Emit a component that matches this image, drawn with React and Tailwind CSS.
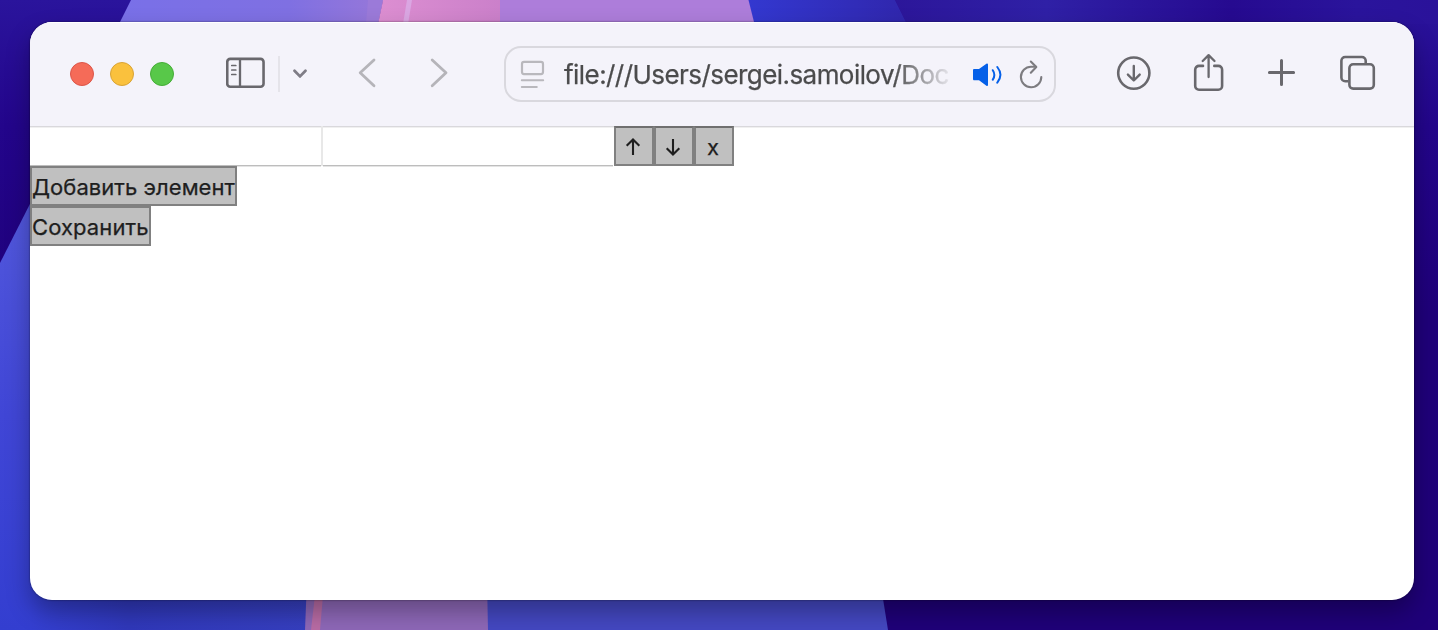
import React from "react";

function Wallpaper() {
  return (
    <svg className="absolute inset-0 h-full w-full" viewBox="0 0 1438 630" preserveAspectRatio="none" aria-hidden="true">
      <defs>
        <linearGradient id="base" x1="0" y1="0" x2="0" y2="1">
          <stop offset="0" stopColor="#2a149c" />
          <stop offset="0.2" stopColor="#23058b" />
          <stop offset="0.5" stopColor="#1f007a" />
          <stop offset="1" stopColor="#1f0079" />
        </linearGradient>
        <linearGradient id="topLeft" gradientUnits="userSpaceOnUse" x1="120" y1="0" x2="380" y2="0">
          <stop offset="0" stopColor="#7970e8" />
          <stop offset="0.65" stopColor="#7f70e2" />
          <stop offset="1" stopColor="#9677d9" />
        </linearGradient>
        <linearGradient id="pink" gradientUnits="userSpaceOnUse" x1="380" y1="0" x2="500" y2="0">
          <stop offset="0" stopColor="#dc8ed1" />
          <stop offset="1" stopColor="#cb80ca" />
        </linearGradient>
        <linearGradient id="topBlue" gradientUnits="userSpaceOnUse" x1="748" y1="0" x2="910" y2="0">
          <stop offset="0" stopColor="#3338d0" />
          <stop offset="1" stopColor="#3026ac" />
        </linearGradient>
        <linearGradient id="topDark" gradientUnits="userSpaceOnUse" x1="895" y1="0" x2="1438" y2="0">
          <stop offset="0" stopColor="#2c169a" />
          <stop offset="0.28" stopColor="#2f20a6" />
          <stop offset="0.62" stopColor="#260a90" />
          <stop offset="0.85" stopColor="#2a149c" />
          <stop offset="1" stopColor="#2a129a" />
        </linearGradient>
        <linearGradient id="leftBlue" gradientUnits="userSpaceOnUse" x1="0" y1="200" x2="0" y2="630">
          <stop offset="0" stopColor="#5258dc" />
          <stop offset="0.5" stopColor="#4046d6" />
          <stop offset="1" stopColor="#333ed0" />
        </linearGradient>
        <linearGradient id="bottomBlue" gradientUnits="userSpaceOnUse" x1="30" y1="0" x2="310" y2="0">
          <stop offset="0" stopColor="#343fd1" />
          <stop offset="0.35" stopColor="#3038bb" />
          <stop offset="1" stopColor="#363fc0" />
        </linearGradient>
      </defs>
      <rect width="1438" height="630" fill="url(#base)" />
      <polygon points="131,0 383,0 378,24 119,24" fill="url(#topLeft)" />
      <polygon points="368,0 383,0 378,24 366,24" fill="#9b7ad9" />
      <polygon points="383,0 500,0 500,24 378,24" fill="url(#pink)" />
      <polygon points="407,0 412,0 408,24 403,24" fill="#daa6e2" />
      <polygon points="748,0 895,0 907,24 754,24" fill="url(#topBlue)" />
      <polygon points="500,0 748.5,0 754.5,24 500,24" fill="#ad7dda" />
      <polygon points="895,0 1438,0 1438,24 907,24" fill="url(#topDark)" />
      <polygon points="0,263 34,196 60,630 0,630" fill="url(#leftBlue)" />
      <rect x="30" y="580" width="280" height="50" fill="url(#bottomBlue)" />
      <polygon points="307,580 488,580 488,630 305,630" fill="#8e68b8" />
      <polygon points="315,595 323,595 320,630 311,630" fill="#b96ca5" />
      <polygon points="487,580 880,580 888,630 488,630" fill="#4448c2" />
    </svg>
  );
}

function SidebarIcon() {
  return (
    <svg className="h-[104px] w-[40px] shrink-0" viewBox="226 22 40 104" fill="none" stroke="#69686d">
      <rect x="227.25" y="58.9" width="36.3" height="27.8" rx="3" strokeWidth="2.6" />
      <path d="M240 59v28" strokeWidth="2.3" />
      <path d="M231.8 65.5h4M231.8 70h4M231.8 74.5h4" strokeWidth="1.7" strokeLinecap="round" />
    </svg>
  );
}

function ChevronDown() {
  return (
    <svg className="ml-[12px] h-[104px] w-[16px] shrink-0" viewBox="292 22 16 104" fill="none" stroke="#7f7d86">
      <path d="M294.5 70.7l5.5 5.7 5.5-5.7" strokeWidth="2.8" strokeLinecap="round" strokeLinejoin="round" />
    </svg>
  );
}

function BackIcon() {
  return (
    <svg className="ml-[50px] h-[104px] w-[18px] shrink-0" viewBox="358 22 18 104" fill="none" stroke="#b5b4b9">
      <path d="M374 60l-13.8 12.8L374 85.8" strokeWidth="2.8" strokeLinecap="round" strokeLinejoin="round" />
    </svg>
  );
}

function ForwardIcon() {
  return (
    <svg className="ml-[54px] h-[104px] w-[18px] shrink-0" viewBox="430 22 18 104" fill="none" stroke="#b5b4b9">
      <path d="M432.2 60L446 72.8l-13.8 13" strokeWidth="2.8" strokeLinecap="round" strokeLinejoin="round" />
    </svg>
  );
}

function PageIcon() {
  return (
    <svg className="h-[52px] w-[26px] shrink-0" viewBox="520 48 26 52" fill="none" stroke="#b9b8bd">
      <rect x="522" y="61.9" width="21" height="12.2" rx="2" strokeWidth="2.2" />
      <path d="M521.8 80.3h21.400M521.800 87h15" strokeWidth="2" strokeLinecap="round" />
    </svg>
  );
}

function SpeakerIcon() {
  return (
    <svg className="ml-[22px] h-[52px] w-[30px] shrink-0" viewBox="973 48 30 52" fill="none" stroke="#0560e8">
      <path
        d="M974.3 69h4.7l7.4-5.2c.8-.6 1.6-.2 1.6.7v20.6c0 .9-.8 1.3-1.6.7L979 80.3h-4.7c-.8 0-1.3-.5-1.3-1.3v-8.7c0-.8.5-1.3 1.3-1.3z"
        fill="#0560e8"
        stroke="none"
      />
      <path d="M992.8 70.2c1.900 2.900 1.900 6.500 0 9.400M997.300 67c4 5 4 10.700 0 15.700" strokeWidth="2" strokeLinecap="round" />
    </svg>
  );
}

function ReloadIcon() {
  return (
    <svg className="ml-[16px] h-[52px] w-[26px] shrink-0" viewBox="1019 48 26 52" fill="none" stroke="#7d7c80">
      <path d="M1036 66.800h-5A10.200 10.200 0 1 0 1041.300 77" strokeWidth="2.100" strokeLinecap="round" />
      <path d="M1030.800 61.600l5.500 5.500-5.500 5.600" strokeWidth="2.100" strokeLinecap="round" strokeLinejoin="round" />
    </svg>
  );
}

function DownloadIcon() {
  return (
    <svg className="ml-[60px] h-[104px] w-[36px] shrink-0" viewBox="1116 22 36 104" fill="none" stroke="#69686d">
      <circle cx="1133.800" cy="73.100" r="15.600" strokeWidth="2.600" />
      <path d="M1133.800 66v14.300M1127.900 74.600l5.900 5.900 5.900-5.900" strokeWidth="2.400" strokeLinecap="round" strokeLinejoin="round" />
    </svg>
  );
}

function ShareIcon() {
  return (
    <svg className="ml-[41px] h-[104px] w-[32px] shrink-0" viewBox="1193 22 32 104" fill="none" stroke="#69686d" strokeLinecap="round" strokeLinejoin="round">
      <path d="M1203 65.900h-4a3.800 3.800 0 0 0-3.800 3.800v16.200a3.800 3.800 0 0 0 3.800 3.800h19.300a3.800 3.800 0 0 0 3.800-3.800V69.700a3.800 3.800 0 0 0-3.800-3.800h-4" strokeWidth="2.600" />
      <path d="M1208.600 77V55.500M1202.700 61l5.900-5.900 5.900 5.900" strokeWidth="2.300" />
    </svg>
  );
}

function PlusIcon() {
  return (
    <svg className="ml-[42px] h-[104px] w-[30px] shrink-0" viewBox="1267 22 30 104" fill="none" stroke="#69686d">
      <path d="M1281.500 60.400v24.200M1269.400 72.500h24.200" strokeWidth="3" strokeLinecap="round" />
    </svg>
  );
}

function TabsIcon() {
  return (
    <svg className="ml-[42px] h-[104px] w-[38px] shrink-0" viewBox="1339 22 38 104" fill="none" stroke="#69686d" strokeWidth="2.600">
      <path d="M1348.500 81.200h-3.300a3.800 3.800 0 0 1-3.800-3.800V60.800a3.800 3.800 0 0 1 3.800-3.800h16.700a3.800 3.800 0 0 1 3.800 3.800v2.700" />
      <rect x="1349.400" y="64.300" width="24.400" height="24.300" rx="3.800" />
    </svg>
  );
}

function ArrowIcon({ down }) {
  return (
    <svg className="mr-[2px] h-[36px] w-[34px] shrink-0" viewBox="0 0 34 36" fill="none" stroke="#1e1e1e" strokeWidth="2.1">
      <path d={down ? "M17 11v15.2M10.7 20.2l6.3 6.3 6.3-6.3" : "M17 27V11.8M10.7 17.8l6.3-6.3 6.3 6.3"} />
    </svg>
  );
}

function ItemButton({ label, children }) {
  return (
    <button
      aria-label={label}
      className="flex h-[40px] w-[40px] items-center justify-center border-2 border-t-[#6f6f6f] border-r-[#808080] border-b-[#808080] border-l-[#808080] bg-[#c0c0c0] text-[22px] text-[#1e1e1e]"
    >
      {children}
    </button>
  );
}

export default function App() {
  return (
    <div className="relative h-[630px] w-[1438px] overflow-hidden px-[30px] pt-[22px] font-['Inter',sans-serif]">
      <Wallpaper />
      <div className="relative h-[578px] w-[1384px] rounded-[22px] shadow-[0_12px_24px_rgba(0,0,0,0.3),0_0_2px_rgba(0,0,0,0.6)]">
        <div className="flex h-full flex-col overflow-hidden rounded-[22px] bg-white">
          <header className="flex h-[104px] shrink-0 items-center bg-[#f4f3fa] pl-[40px] shadow-[inset_0_1px_0_#ffffff]">
            <div className="mr-[52px] flex shrink-0 gap-[16px]">
              <span className="h-[24px] w-[24px] rounded-full border border-[#dc5548] bg-[#f56b58]" />
              <span className="h-[24px] w-[24px] rounded-full border border-[#d9a335] bg-[#fac13d]" />
              <span className="h-[24px] w-[24px] rounded-full border border-[#45ad37] bg-[#58c849]" />
            </div>
            <SidebarIcon />
            <span className="ml-[12px] h-[36px] w-[2px] shrink-0 bg-[#e5e4ea]" />
            <ChevronDown />
            <BackIcon />
            <ForwardIcon />
            <div className="ml-[56px] flex h-[56px] w-[552px] shrink-0 items-center rounded-[17px] border-2 border-[#d9d8de] pl-[14px]">
              <PageIcon />
              <div className="ml-[18px] w-[387px] shrink-0 whitespace-nowrap pt-[2px] text-[26px] leading-[36px] tracking-[-0.56px] text-[#4b4b4c] [-webkit-text-stroke:0.25px_#4b4b4c] [mask-image:linear-gradient(to_right,#000_85%,transparent_101%)]">
                file:///Users/sergei.samoilov/Doc
              </div>
              <SpeakerIcon />
              <ReloadIcon />
            </div>
            <DownloadIcon />
            <ShareIcon />
            <PlusIcon />
            <TabsIcon />
          </header>
          <main className="flex-1 shadow-[inset_0_1px_0_#d9d8dc,inset_0_2px_0_#f0f0f0]">
            <div className="flex h-[40px]">
              <div className="flex h-[41px] w-[291px] flex-col justify-end border-b border-b-[#e4e4e4]">
                <div className="h-px bg-[#bdbdbd]" />
              </div>
              <div className="h-[40px] w-[2px] bg-[#e8e8e8]" />
              <div className="flex h-[41px] w-[290px] flex-col justify-end border-b border-b-[#e4e4e4]">
                <div className="h-px bg-[#bdbdbd]" />
              </div>
              <div className="ml-px flex">
                <ItemButton label="↑"><ArrowIcon /></ItemButton>
                <ItemButton label="↓"><ArrowIcon down /></ItemButton>
                <ItemButton><span className="pt-[2px] pr-[2px] [-webkit-text-stroke:0.25px_#1e1e1e]">x</span></ItemButton>
              </div>
            </div>
            <div className="relative flex flex-col items-start">
              <button className="flex h-[40px] w-[207px] items-center whitespace-nowrap border-2 border-[#808080] bg-[#c0c0c0] pt-[2px] text-[22px] tracking-[0.05px] text-[#1e1e1e] [-webkit-text-stroke:0.25px_#1e1e1e]">
                Добавить элемент
              </button>
              <button className="flex h-[40px] w-[121px] items-center whitespace-nowrap border-2 border-[#808080] bg-[#c0c0c0] pt-[2px] text-[22px] tracking-[0.1px] text-[#1e1e1e] [-webkit-text-stroke:0.25px_#1e1e1e]">
                Сохранить
              </button>
            </div>
          </main>
        </div>
      </div>
    </div>
  );
}
